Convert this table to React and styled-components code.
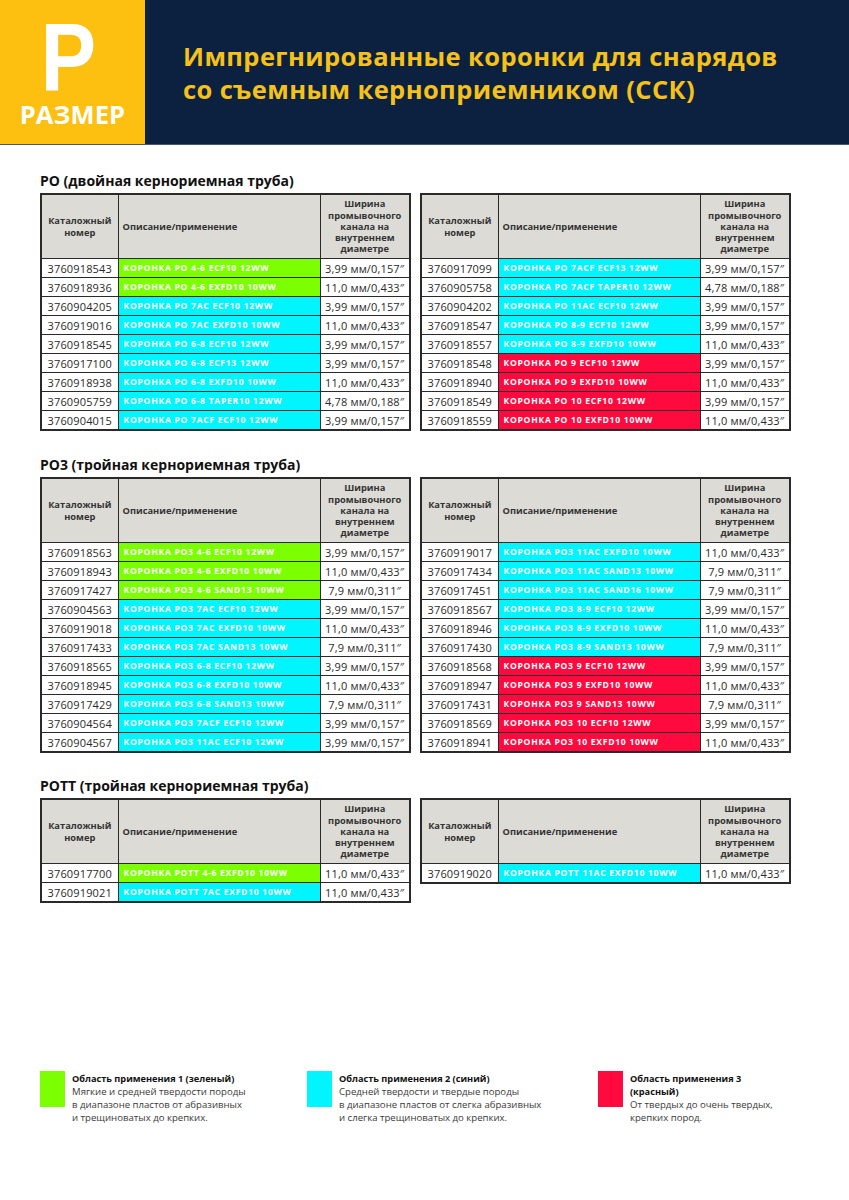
import styled, { createGlobalStyle } from "styled-components";

const GlobalStyle = createGlobalStyle`
	html, body {
		margin: 0;
		padding: 0;
		background: #ffffff;
	}
	body {
		font-family: "Open Sans", "Noto Sans", "DejaVu Sans", sans-serif;
		color: #1d1d1d;
	}
`;

const COLORS = {
	g: "#7cff00",
	c: "#00f5ff",
	r: "#ff0a3e",
};

const Page = styled.div`
	width: 849px;
	min-height: 1200px;
	display: flex;
	flex-direction: column;
`;

const Header = styled.header`
	display: flex;
	height: 144px;
	background: #0c2140;
	border-bottom: 1px solid #4a5a6e;
`;

const Badge = styled.div`
	width: 145px;
	background: #fdc010;
	display: flex;
	flex-direction: column;
	align-items: center;
	color: #ffffff;
	font-weight: 700;
`;

const BadgeLetter = styled.div`
	font-family: "Liberation Sans", "Open Sans", sans-serif;
	font-size: 97px;
	line-height: 72px;
	height: 72px;
	margin-top: 21px;
	margin-left: -8px;
	transform: scaleX(0.86);
`;

const BadgeWord = styled.div`
	font-size: 25.5px;
	line-height: 24px;
	height: 24px;
	margin-top: 9px;
	letter-spacing: 0.2px;
`;

const Title = styled.h1`
	margin: 0;
	padding: 40px 0 0 38px;
	color: #f6c21a;
	font-size: 25.5px;
	line-height: 33px;
	font-weight: 700;
	letter-spacing: 0.4px;
`;

const Content = styled.main`
	padding: 0 60px 0 40px;
	display: flex;
	flex-direction: column;
`;

const Section = styled.section`
	margin-top: ${(p) => p.$top}px;
`;

const SectionTitle = styled.h2`
	margin: 0 0 4px;
	font-size: 14px;
	line-height: 16px;
	font-weight: 700;
	color: #111111;
`;

const Pair = styled.div`
	display: grid;
	grid-template-columns: 369px 369px;
	column-gap: 11px;
	align-items: start;
`;

const Table = styled.table`
	width: 369px;
	border-collapse: collapse;
	table-layout: fixed;
	border: 2px solid #2a2a2a;
`;

const HeadCell = styled.th`
	background: #dddbd6;
	border: 1px solid #2a2a2a;
	height: 63px;
	padding: 0 4px;
	font-size: 9.3px;
	line-height: 11.2px;
	font-weight: 700;
	color: #333333;
	text-align: ${(p) => p.$align || "center"};
`;

const Cell = styled.td`
	border: 1px solid #2a2a2a;
	height: 18px;
	padding: 0;
	font-size: 11px;
	letter-spacing: 0.15px;
	color: #2a2a2a;
	text-align: center;
	white-space: nowrap;
`;

const DescCell = styled.td`
	border: 1px solid #2a2a2a;
	height: 18px;
	padding: 0 0 0 5px;
	background: ${(p) => COLORS[p.$tone]};
	color: #ffffff;
	font-size: 8.6px;
	font-weight: 700;
	letter-spacing: 0.7px;
	text-transform: uppercase;
	white-space: nowrap;
`;

const Legend = styled.footer`
	margin-top: auto;
	padding: 0 0 76px 40px;
	display: grid;
	grid-template-columns: 267px 291px 200px;
`;

const LegendItem = styled.div`
	display: flex;
	gap: 7px;
	align-items: flex-start;
`;

const Swatch = styled.div`
	width: 25px;
	height: 36px;
	flex-shrink: 0;
	background: ${(p) => COLORS[p.$tone]};
`;

const LegendText = styled.div`
	padding-top: 1px;
	font-size: 9.6px;
	line-height: 13px;
	color: #3a3a3a;
	white-space: nowrap;
	strong {
		display: block;
		font-size: 9.2px;
		color: #111111;
		font-weight: 700;
	}
`;

const W399 = "3,99 мм/0,157″";
const W110 = "11,0 мм/0,433″";
const W478 = "4,78 мм/0,188″";
const W79 = "7,9 мм/0,311″";

const sections = [
	{
		title: "РО (двойная кернориемная труба)",
		top: 28,
		left: [
			["3760918543", "Коронка РО 4-6 ECF10 12WW", "g", W399],
			["3760918936", "Коронка РО 4-6 EXFD10 10WW", "g", W110],
			["3760904205", "Коронка РО 7AC ECF10 12WW", "c", W399],
			["3760919016", "Коронка РО 7AC EXFD10 10WW", "c", W110],
			["3760918545", "Коронка РО 6-8 ECF10 12WW", "c", W399],
			["3760917100", "Коронка РО 6-8 ECF13 12WW", "c", W399],
			["3760918938", "Коронка РО 6-8 EXFD10 10WW", "c", W110],
			["3760905759", "Коронка РО 6-8 TAPER10 12WW", "c", W478],
			["3760904015", "Коронка РО 7ACF ECF10 12WW", "c", W399],
		],
		right: [
			["3760917099", "Коронка РО 7ACF ECF13 12WW", "c", W399],
			["3760905758", "Коронка РО 7ACF TAPER10 12WW", "c", W478],
			["3760904202", "Коронка РО 11AC ECF10 12WW", "c", W399],
			["3760918547", "Коронка РО 8-9 ECF10 12WW", "c", W399],
			["3760918557", "Коронка РО 8-9 EXFD10 10WW", "c", W110],
			["3760918548", "Коронка РО 9 ECF10 12WW", "r", W399],
			["3760918940", "Коронка РО 9 EXFD10 10WW", "r", W110],
			["3760918549", "Коронка РО 10 ECF10 12WW", "r", W399],
			["3760918559", "Коронка РО 10 EXFD10 10WW", "r", W110],
		],
	},
	{
		title: "РО3 (тройная кернориемная труба)",
		top: 26,
		left: [
			["3760918563", "Коронка РО3 4-6 ECF10 12WW", "g", W399],
			["3760918943", "Коронка РО3 4-6 EXFD10 10WW", "g", W110],
			["3760917427", "Коронка РО3 4-6 SAND13 10WW", "g", W79],
			["3760904563", "Коронка РО3 7AC ECF10 12WW", "c", W399],
			["3760919018", "Коронка РО3 7AC EXFD10 10WW", "c", W110],
			["3760917433", "Коронка РО3 7AC SAND13 10WW", "c", W79],
			["3760918565", "Коронка РО3 6-8 ECF10 12WW", "c", W399],
			["3760918945", "Коронка РО3 6-8 EXFD10 10WW", "c", W110],
			["3760917429", "Коронка РО3 6-8 SAND13 10WW", "c", W79],
			["3760904564", "Коронка РО3 7ACF ECF10 12WW", "c", W399],
			["3760904567", "Коронка РО3 11AC ECF10 12WW", "c", W399],
		],
		right: [
			["3760919017", "Коронка РО3 11AC EXFD10 10WW", "c", W110],
			["3760917434", "Коронка РО3 11AC SAND13 10WW", "c", W79],
			["3760917451", "Коронка РО3 11AC SAND16 10WW", "c", W79],
			["3760918567", "Коронка РО3 8-9 ECF10 12WW", "c", W399],
			["3760918946", "Коронка РО3 8-9 EXFD10 10WW", "c", W110],
			["3760917430", "Коронка РО3 8-9 SAND13 10WW", "c", W79],
			["3760918568", "Коронка РО3 9 ECF10 12WW", "r", W399],
			["3760918947", "Коронка РО3 9 EXFD10 10WW", "r", W110],
			["3760917431", "Коронка РО3 9 SAND13 10WW", "r", W79],
			["3760918569", "Коронка РО3 10 ECF10 12WW", "r", W399],
			["3760918941", "Коронка РО3 10 EXFD10 10WW", "r", W110],
		],
	},
	{
		title: "РОТТ (тройная кернориемная труба)",
		top: 25,
		left: [
			["3760917700", "Коронка РОТТ 4-6 EXFD10 10WW", "g", W110],
			["3760919021", "Коронка РОТТ 7AC EXFD10 10WW", "c", W110],
		],
		right: [["3760919020", "Коронка РОТТ 11AC EXFD10 10WW", "c", W110]],
	},
];

const PartTable = ({ rows }) => (
	<Table>
		<colgroup>
			<col style={{ width: 77 }} />
			<col style={{ width: 202 }} />
			<col style={{ width: 90 }} />
		</colgroup>
		<thead>
			<tr>
				<HeadCell>
					Каталожный
					<br />
					номер
				</HeadCell>
				<HeadCell $align="left">Описание/применение</HeadCell>
				<HeadCell>
					Ширина
					<br />
					промывочного
					<br />
					канала на
					<br />
					внутреннем
					<br />
					диаметре
				</HeadCell>
			</tr>
		</thead>
		<tbody>
			{rows.map(([num, desc, tone, width]) => (
				<tr key={num}>
					<Cell>{num}</Cell>
					<DescCell $tone={tone}>{desc}</DescCell>
					<Cell>{width}</Cell>
				</tr>
			))}
		</tbody>
	</Table>
);

const App = () => {
	return (
		<>
			<GlobalStyle />
			<Page>
				<Header>
					<Badge>
						<BadgeLetter>P</BadgeLetter>
						<BadgeWord>РАЗМЕР</BadgeWord>
					</Badge>
					<Title>
						Импрегнированные коронки для снарядов
						<br />
						со съемным керноприемником (ССК)
					</Title>
				</Header>
				<Content>
					{sections.map((s) => (
						<Section key={s.title} $top={s.top}>
							<SectionTitle>{s.title}</SectionTitle>
							<Pair>
								<PartTable rows={s.left} />
								<PartTable rows={s.right} />
							</Pair>
						</Section>
					))}
				</Content>
				<Legend>
					<LegendItem>
						<Swatch $tone="g" />
						<LegendText>
							<strong>Область применения 1 (зеленый)</strong>
							Мягкие и средней твердости породы
							<br />в диапазоне пластов от абразивных
							<br />и трещиноватых до крепких.
						</LegendText>
					</LegendItem>
					<LegendItem>
						<Swatch $tone="c" />
						<LegendText>
							<strong>Область применения 2 (синий)</strong>
							Средней твердости и твердые породы
							<br />в диапазоне пластов от слегка абразивных
							<br />и слегка трещиноватых до крепких.
						</LegendText>
					</LegendItem>
					<LegendItem>
						<Swatch $tone="r" />
						<LegendText>
							<strong>
								Область применения 3
								<br />
								(красный)
							</strong>
							От твердых до очень твердых,
							<br />
							крепких пород.
						</LegendText>
					</LegendItem>
				</Legend>
			</Page>
		</>
	);
};

export default App;
